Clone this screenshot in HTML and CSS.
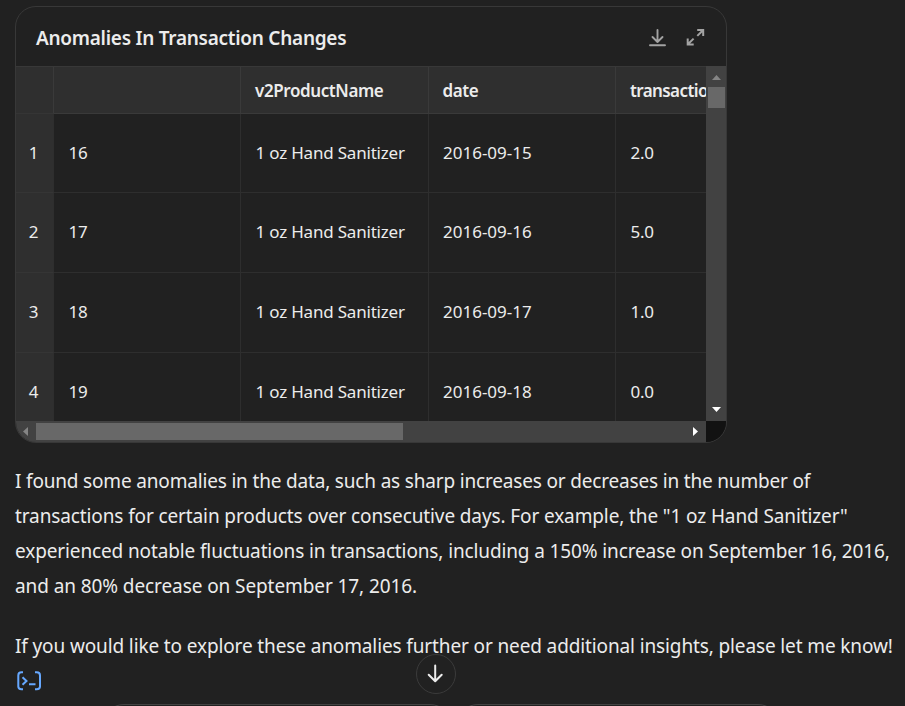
FILE: index.html
```html
<!DOCTYPE html>
<html lang="en">
<head>
<meta charset="utf-8">
<title>Anomalies In Transaction Changes</title>
<link rel="stylesheet" href="styles.css">
</head>
<body>
<main class="page">
  <section class="card">
    <header class="card-head">
      <h2><span>Anomalies In Transaction Changes</span></h2>
      <svg class="download" width="20" height="20" viewBox="0 0 20 20"><path d="M9.5 2v12M4.5 9l5 5 5-5M2 17.3h15"/></svg>
      <svg class="expand" width="20" height="20" viewBox="0 0 20 20"><path d="M11.2 2h6v6M17 2.2l-5.7 5.7M1.7 10.5v6h6M1.9 16.3l5.7-5.7"/></svg>
    </header>
    <div class="viewport">
      <div class="grid">
        <div class="row head"><b class="idx"></b><b></b><b><span class="h-name">v2ProductName</span></b><b><span class="h-date">date</span></b><b><span class="h-tx">transactions</span></b></div>
        <div class="row"><i class="idx">1</i><i>16</i><i><span class="name">1 oz Hand Sanitizer</span></i><i><span class="date">2016-09-15</span></i><i>2.0</i></div>
        <div class="row"><i class="idx">2</i><i>17</i><i><span class="name">1 oz Hand Sanitizer</span></i><i><span class="date">2016-09-16</span></i><i>5.0</i></div>
        <div class="row"><i class="idx">3</i><i>18</i><i><span class="name">1 oz Hand Sanitizer</span></i><i><span class="date">2016-09-17</span></i><i>1.0</i></div>
        <div class="row"><i class="idx">4</i><i>19</i><i><span class="name">1 oz Hand Sanitizer</span></i><i><span class="date">2016-09-18</span></i><i>0.0</i></div>
      </div>
      <div class="vbar">
        <svg width="20" height="21" viewBox="0 0 20 21"><path fill="#858585" d="M6 14l4.5-5 4.5 5z"/></svg>
        <div class="vthumb"></div>
        <svg class="end" width="20" height="21" viewBox="0 0 20 21"><path fill="#fff" d="M6 7h9l-4.5 5z"/></svg>
      </div>
      <div class="hbar">
        <svg width="20" height="21" viewBox="0 0 20 21"><path fill="#858585" d="M12 6v9l-5-4.5z"/></svg>
        <div class="hthumb"></div>
        <svg class="end" width="20" height="21" viewBox="0 0 20 21"><path fill="#fff" d="M7 6v9l5-4.5z"/></svg>
      </div>
      <div class="corner"></div>
    </div>
  </section>
  <div class="message">
    <p><span class="l1">I found some anomalies in the data, such as sharp increases or decreases in the number of</span><br><span class="l2">transactions for certain products over consecutive days. For example, the "1 oz Hand Sanitizer"</span><br><span class="l3">experienced notable fluctuations in transactions, including a 150% increase on September 16, 2016,</span><br><span class="l4">and an 80% decrease on September 17, 2016.</span></p>
    <p><span class="l5">If you would like to explore these anomalies further or need additional insights, please let me know!</span></p>
    <svg class="code" width="26" height="20" viewBox="0 0 26 20"><path d="M7 1.3H5.5Q2.3 1.3 2.3 4.5v11Q2.3 18.2 5.5 18.2H7M19 1.3h1.7Q24 1.3 24 4.5v11Q24 18.2 20.7 18.2H19M6.5 6.2l4 3.8-4 3.8M13 13.2h6.5"/></svg>
  </div>
  <div class="suggestions"><div></div><div></div></div>
  <button class="scroll-down" aria-label="Scroll to bottom"><svg width="20" height="20" viewBox="0 0 20 20"><path d="M9.2 1.5v15.5M2.7 10.7l6.5 6.5 6.5-6.5"/></svg></button>
</main>
</body>
</html>
```
FILE: styles.css
```css
* { box-sizing: border-box; }
body { margin: 0; background: #212121; color: #ececec; font-family: "Noto Sans", "Open Sans", sans-serif; overflow: hidden; }
svg { display: block; flex: none; fill: none; }
.page { position: relative; height: 706px; padding: 6px 0 0 15px; overflow: hidden; display: flex; flex-direction: column; }
.card { flex: none; width: 712px; height: 437px; border: 1px solid #383838; border-radius: 21px; overflow: hidden; }
.card-head { height: 59px; padding: 3px 20px 0 20px; display: flex; align-items: center; }
h2 { flex: 1; margin: 0; font-size: 19px; font-weight: 600; line-height: 28px; white-space: nowrap; letter-spacing: -.27px; }
.card-head svg { stroke: #a3a3a3; stroke-width: 1.9; stroke-linecap: round; stroke-linejoin: round; }
.card-head .expand { margin-left: 18px; stroke-width: 2; stroke-linecap: butt; stroke-linejoin: miter; }
.viewport { display: grid; grid-template-columns: 690px 20px; grid-template-rows: 355px 21px; }
.grid { overflow: hidden; border-top: 1px solid #383838; }
.row { display: grid; grid-template-columns: 38px 187px 187.5px 187.5px 188px; height: 80px; font-size: 17px; }
.row > * { border-right: 1px solid #2e2e2e; border-bottom: 1px solid #2e2e2e; display: flex; align-items: center; padding: 0 0 2px 14.5px; font-style: normal; font-weight: 400; white-space: nowrap; letter-spacing: -.3px; }
.head { height: 47px; background: #2f2f2f; }
.row.head > * { font-weight: 600; border-color: #3a3a3a; padding: 0 0 0 14px; letter-spacing: -.4px; }
.row .h-tx { letter-spacing: -.6px; }
.name { letter-spacing: -.2px; }
.date { letter-spacing: 0; }
.head + .row { height: 79px; }
.row .idx { background: #2f2f2f; padding: 0 2px 2px 0; justify-content: center; border-bottom-color: #353535; }
.vbar { background: #424242; display: flex; flex-direction: column; }
.vthumb { width: 17px; height: 21px; margin-left: 2px; background: #686868; }
.hbar { background: #424242; display: flex; }
.hthumb { width: 367px; height: 17px; margin-top: 2px; background: #686868; }
.vbar .end { margin-top: auto; }
.hbar .end { margin-left: auto; }
.corner { background: #121212; }
.message { flex: none; padding-top: 21px; font-size: 19px; line-height: 35px; height: 261px; white-space: nowrap; }
.message p { margin: 0 0 25px; }
.message p + p { margin: 0; }
.code { margin: 7px 0 0 1px; stroke: #66a8ff; stroke-width: 2; }
.l1 { letter-spacing: -.175px; }
.l2 { letter-spacing: -.116px; }
.l3, .l5 { letter-spacing: -.125px; }
.l4 { letter-spacing: -.09px; }
.suggestions { flex: none; display: flex; gap: 10px; margin-left: 87px; height: 60px; }
.suggestions div { width: 350px; border: 1px solid #424242; border-radius: 22px; }
.suggestions div + div { width: 324px; margin-left: -6px; }
.scroll-down { position: absolute; left: 416px; top: 654px; width: 40px; height: 40px; border: 1px solid #3b3b3b; border-radius: 50%; background: #212121; padding: 0; display: grid; place-items: center; }
.scroll-down svg { stroke: #ececec; stroke-width: 2; stroke-linecap: round; stroke-linejoin: round; }
```
